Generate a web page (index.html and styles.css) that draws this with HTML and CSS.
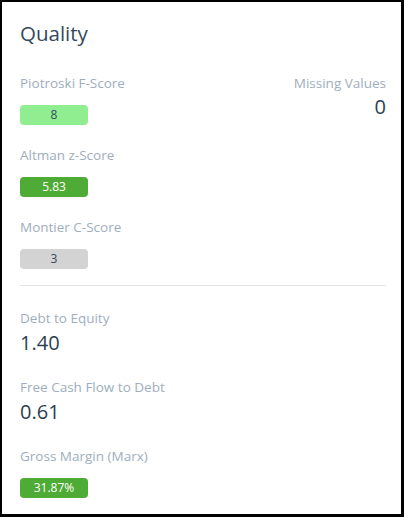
FILE: index.html
```html
<!DOCTYPE html>
<html lang="en">

<head>
    <meta charset="UTF-8">
    <meta name="viewport" content="width=device-width, initial-scale=1.0">
    <title>Quality</title>
    <link rel="stylesheet" href="styles.css">
</head>

<body>

    <div class="card">

        <!-- Header -->
        <div class="card-title">Quality</div>

        <!-- Scores -->
        <div class="score-row">
            <div class="metric">
                <div class="label">Piotroski F-Score</div>
                <div class="badge badge-light">8</div>
            </div>
            <div class="metric metric-right">
                <div class="label">Missing Values</div>
                <div class="value">0</div>
            </div>
        </div>

        <div class="metric">
            <div class="label">Altman z-Score</div>
            <div class="badge badge-green">5.83</div>
        </div>

        <div class="metric">
            <div class="label">Montier C-Score</div>
            <div class="badge badge-gray">3</div>
        </div>

        <hr class="divider">

        <!-- Ratios -->
        <div class="metric metric-ratio">
            <div class="label">Debt to Equity</div>
            <div class="value">1.40</div>
        </div>

        <div class="metric metric-ratio">
            <div class="label">Free Cash Flow to Debt</div>
            <div class="value">0.61</div>
        </div>

        <div class="metric">
            <div class="label">Gross Margin (Marx)</div>
            <div class="badge badge-green">31.87%</div>
        </div>

    </div>

</body>
</html>
```

FILE: styles.css
```css
body {
    margin: 0;
    padding: 0;
    background: #fff;
    font-family: 'Open Sans', 'Noto Sans', sans-serif;
}

.card {
    width: 404px;
    height: 517px;
    box-sizing: border-box;
    border: 2px solid #000;
    border-right-width: 3px;
    border-bottom-width: 3px;
    padding: 19px 15px 0 18px;
    background: #fff;
}

.card-title {
    font-size: 20.5px;
    line-height: 24px;
    color: #34495e;
    margin-bottom: 28px;
}

.score-row {
    display: flex;
    justify-content: space-between;
}

.metric {
    margin-bottom: 20px;
}

.metric-ratio {
    margin-bottom: 22px;
}

.metric-right {
    text-align: right;
}

.label {
    font-size: 13.5px;
    line-height: 20px;
    color: #9eaebe;
}

.value {
    font-size: 20px;
    line-height: 24px;
    color: #2c3e50;
    margin-top: 3px;
}

.metric-right .value {
    margin-top: 2px;
}

.badge {
    width: 68px;
    height: 20px;
    line-height: 20px;
    margin-top: 12px;
    border-radius: 4px;
    text-align: center;
    font-size: 12px;
}

.badge-light {
    background-color: #90ee90;
    color: #34495e;
}

.badge-green {
    background-color: #4eab35;
    color: #fff;
}

.badge-gray {
    background-color: #d3d3d3;
    color: #34495e;
}

.divider {
    border: none;
    border-top: 1px solid #e6e6e6;
    margin: -4px 0 22px 0;
}
```
